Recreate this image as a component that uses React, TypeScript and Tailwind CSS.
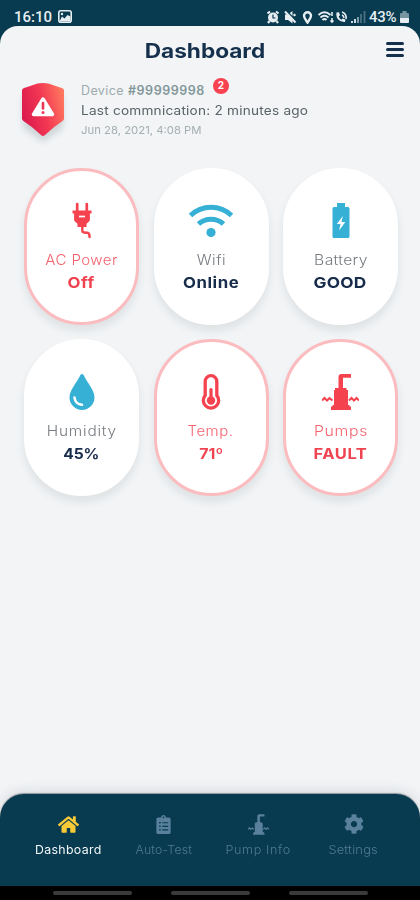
import React from "react";
import { FaClipboardList, FaCog, FaHome } from "react-icons/fa";

const PlugIcon = () => (
  <svg viewBox="0 0 20 37" className="h-[37px] w-5" fill="none">
    <path d="M5.200 2v8M14.800 2v8" stroke="#f5424f" strokeWidth="2.700" strokeLinecap="round" />
    <path d="M.5 8.500h19v3h-1.600v6.200a3 3 0 0 1-1.400 2.300l-2 1.800v3.200H5.500v-3.200l-2-1.800A3 3 0 0 1 2.100 17.700v-6.200H.5z" fill="#f5424f" />
    <path d="M7 14.500h6" stroke="#fff" strokeWidth="1.700" />
    <path d="M10.300 24v4.500q0 1.800 1.800 2l3 .3q2 .2 2.200 2l.3 2.200" stroke="#f5424f" strokeWidth="2.400" strokeLinecap="round" />
  </svg>
);

const WifiIcon = () => (
  <svg viewBox="0 0 46 34" className="h-[34px] w-[46px]" fill="none" stroke="#36b0d5">
    <path d="M2.500 11.500c11.500-11 29.500-11 41 0" strokeWidth="5" />
    <path d="M10.500 20c7-6.500 18-6.500 25 0" strokeWidth="5" />
    <circle cx="23" cy="28.500" r="4.600" fill="#36b0d5" stroke="none" />
  </svg>
);

const BatteryIcon = () => (
  <svg viewBox="0 0 18 36" className="h-9 w-[18px]">
    <path d="M5 0h8v4h3a1.500 1.500 0 0 1 1.500 1.500v28A1.500 1.500 0 0 1 16 35H2a1.500 1.500 0 0 1-1.500-1.500v-28A1.500 1.500 0 0 1 2 4h3z" fill="#36b0d5" />
    <path d="m10.800 13-6 8h3.700l-1.400 6.500 6.200-8.500H9.500z" fill="#fff" />
  </svg>
);

const DropIcon = () => (
  <svg viewBox="0 0 26 36" className="h-9 w-[26px]">
    <path d="M13 0c-1.200 0-1.800 1.200-2.400 2.400C7.500 9 .5 16 .5 23.500a12.500 12.500 0 0 0 25 0C25.500 16 18.500 9 15.400 2.400 14.800 1.200 14.200 0 13 0z" fill="#36b0d5" />
    <path d="M5.500 23.500c.3 4 3.300 7 7.500 7.300" stroke="#fff" strokeWidth="2.600" strokeLinecap="round" fill="none" />
  </svg>
);

const TempIcon = () => (
  <svg viewBox="0 0 20 36" className="h-9 w-5" fill="none">
    <path d="M4.200 7.500a5.800 5.800 0 0 1 11.600 0v13.800a7.700 7.700 0 1 1-11.600 0z" stroke="#f5424f" strokeWidth="3.300" />
    <path d="M10 15.500v11" stroke="#f5424f" strokeWidth="3.200" strokeLinecap="round" />
    <circle cx="10" cy="26.500" r="4.200" fill="#f5424f" />
  </svg>
);

const PumpIcon = ({ className }: { className: string }) => (
  <svg viewBox="0 0 37 36" className={className} fill="currentColor">
    <path d="M16.500 3q0-3 3-3H29v3.800h-8V14h3.500v2H26v15h1.500v1.500H29V36H9v-3.500h1.500V31H12V16h1v-2h3.500z" />
    <path d="m0 26.500 2.500-2.500 2.500 2.500L7.500 24l3 2.500M27 26.500l2.500-2.500 2.500 2.500 2.500-2.500 2.500 2.500" fill="none" stroke="currentColor" strokeWidth="2" />
  </svg>
);

type CardProps = { icon: React.ReactNode; label: string; value: string; alert?: boolean; labelClass: string; valueClass: string };

const Card = ({ icon, label, value, alert, labelClass, valueClass }: CardProps) => (
  <div className={`flex h-[157px] w-[115px] flex-col items-center rounded-full border-3 bg-white pt-[31px] shadow-[0_6px_9px_rgba(60,80,80,0.11)] ${alert ? "border-[#fbbcc0]" : "border-white"}`}>
    <div className="flex h-[37px] items-center">{icon}</div>
    <div className={`mt-[11px] whitespace-nowrap text-[14px] leading-[20px] font-light ${alert ? "text-[#f4636e]" : "text-[#777c82]"} ${labelClass}`}>{label}</div>
    <div className={`mt-[3px] whitespace-nowrap text-[15px] leading-[20px] font-bold ${alert ? "text-[#ef4350]" : "text-[#172c4b]"} ${valueClass}`}>{value}</div>
  </div>
);

const StatusBar = () => (
  <div className="flex h-[26px] items-end justify-between pr-[11px] pl-[14px] text-[#e6eef2]">
    <div className="flex h-[19px] items-center gap-[6px] font-[Roboto,sans-serif] text-[15px] leading-5 font-medium">
      <span>16:10</span>
      <svg viewBox="0 0 14 13" className="h-[13px] w-[14px]">
        <rect x=".8" y=".8" width="12.400" height="11.400" rx="2" fill="none" stroke="currentColor" strokeWidth="1.600" />
        <path d="m1.500 11.500 2.500-5 2.500 2L9.500 5l3 1.500v5z" fill="currentColor" />
        <circle cx="4" cy="4" r="1.200" fill="currentColor" />
      </svg>
    </div>
    <div className="flex h-[19px] items-center font-[Roboto,sans-serif] text-[14px] leading-5 font-medium">
      <svg viewBox="0 0 103 14" className="h-[14px] w-[103px]" fill="none" stroke="currentColor" strokeWidth="1.600">
        <circle cx="6" cy="7.500" r="5" fill="currentColor" stroke="none" />
        <path d="m.5 3.500 2.500-2M11.500 3.500 9 1.500M2.500 11 1 13M9.500 11l1.500 2" strokeWidth="2.200" />
        <path d="M6 4.500v3.500h2.500" stroke="#083a50" strokeWidth="1.200" />
        <path d="M18 4.500h3L25.500 1v12.500L21 10h-3z" fill="currentColor" stroke="none" />
        <path d="m19.500 1 9.500 9.500" stroke="#083a50" strokeWidth="1.600" />
        <path d="m18 1.500 10.500 11M26.500 5.500l2-1" strokeWidth="2" />
        <path d="M40.500 12.500c-2-3-3.500-4.500-3.500-6.700a3.500 3.500 0 0 1 7 0c0 2.200-1.500 3.700-3.500 6.700z" strokeWidth="2.400" />
        <path d="M51.500 5q6-5.500 12 0M53.500 7.500q4-3.500 8 0M55.500 10q2-2 4 0" strokeWidth="1.900" />
        <path d="M65 2v4M65 8v4M63.500 10.500 65 12l1.500-1.500" strokeWidth="1.600" />
        <path d="M69.500 2.500c-1 6 3 9.500 8.500 9.500l.5-2.500-3-1-1 1.200c-1.500-.8-2.300-1.800-2.800-3.200l1.300-1.200-1-3z" fill="currentColor" stroke="none" />
        <path d="M75 2q5 2 4 7M75 5q2 1 2 3" strokeWidth="1.500" />
        <path d="M85 13v-2M88 13V9" strokeWidth="1.800" />
        <path d="M91 13V7" strokeWidth="1.800" opacity=".6" />
        <path d="M94 13V4M97.500 13V1" strokeWidth="1.800" opacity=".3" />
      </svg>
      <span className="-ml-px w-[30px] whitespace-nowrap text-[15px] tracking-[-0.300px]">43%</span>
      <svg viewBox="0 0 9 14" className="ml-[1px] h-[14px] w-[9px]" fill="currentColor">
        <path d="M2.500 1h4v2H8a1 1 0 0 1 1 1v4H0V4a1 1 0 0 1 1-1h1.500z" opacity=".5" />
        <path d="M0 8h9v4a1 1 0 0 1-1 1H1a1 1 0 0 1-1-1z" />
      </svg>
    </div>
  </div>
);

const ShieldIcon = () => (
  <svg viewBox="0 0 58 72" className="h-[72px] w-[58px]">
    <defs>
      <linearGradient id="shield" x1="0" y1=".6" x2="1" y2=".3">
        <stop offset="0" stopColor="#db1a4d" />
        <stop offset=".5" stopColor="#f23753" />
        <stop offset="1" stopColor="#ff775f" />
      </linearGradient>
      <filter id="soft" x="-30%" y="-30%" width="160%" height="160%"><feGaussianBlur stdDeviation="3" /></filter>
    </defs>
    <path d="M9 18 29 11l20 7v32L29 64 9 50z" fill="#84989a" opacity=".32" filter="url(#soft)" />
    <path d="M10 10C17 8.500 21 5 29 5s12 3.500 19 5q2 .5 2 2.500V40.500q0 1.500-1.500 2.500Q40 48.500 31 57q-2 1.800-4 0Q18 48.500 9.500 43 8 42 8 40.500V12.500Q8 10.500 10 10z" fill="url(#shield)" />
    <path d="m29 21 9.500 15.500h-19z" fill="#fff" stroke="#fff" strokeWidth="3.500" strokeLinejoin="round" />
    <path d="M29 25v5.500" stroke="#ed3654" strokeWidth="2.600" strokeLinecap="round" />
    <circle cx="29" cy="34.500" r="1.500" fill="#ed3654" />
  </svg>
);

const NavItem = ({ icon, label, active, labelClass }: { icon: React.ReactNode; label: string; active?: boolean; labelClass: string }) => (
  <div className={`flex w-[95px] flex-col items-center ${active ? "text-[#f7cb38]" : "text-[#59809c]"}`}>
    <div className="flex h-[22px] items-center">{icon}</div>
    <div className={`mt-[7px] whitespace-nowrap text-[12px] leading-4 ${active ? "text-[#f2f7f9]" : "font-light text-[#4f7a95]"} ${labelClass}`}>{label}</div>
  </div>
);

export default function App() {
  return (
    <div className="flex h-[900px] w-[420px] flex-col overflow-hidden bg-[#083a50] font-[Inter,sans-serif]">
      <StatusBar />
      <div className="flex min-h-0 flex-1 flex-col rounded-t-[18px] bg-[#f2f4f6]">
        <header className="grid h-[48px] grid-cols-[144px_122px_1fr] items-center pt-[1px] pr-[16px]">
          <span />
          <h1 className="flex scale-x-[1.130] justify-center text-[20px] font-bold text-[#14304c]">Dashboard</h1>
          <div className="flex flex-col gap-[3px] justify-self-end pb-[2px]">
            <span className="h-[3px] w-[18px] rounded-full bg-[#14304c]" />
            <span className="h-[3px] w-[18px] rounded-full bg-[#14304c]" />
            <span className="h-[3px] w-[18px] rounded-full bg-[#14304c]" />
          </div>
        </header>
        <section className="flex h-[94px] pt-[4px] pl-[14px]">
          <ShieldIcon />
          <div className="ml-[9px] pt-[3px] whitespace-nowrap">
            <div className="flex h-[20px] items-center pt-px text-[12.500px] text-[#9eabad]">
              <span className="tracking-[0.400px]">Device</span>
              <span className="ml-[4px] font-semibold tracking-[0.550px] text-[#82979a]">#99999998</span>
              <span className="mb-[12px] ml-[8px] flex size-4 items-center justify-center rounded-full bg-[#f94250] text-[10px] font-bold text-white">2</span>
            </div>
            <div className="w-fit origin-left scale-x-[1.090] text-[12.500px] leading-[20px] tracking-[0.200px] text-[#596467]">Last commnication: 2 minutes ago</div>
            <div className="w-fit origin-left scale-x-[1.030] text-[11px] leading-[18px] text-[#a4afb1]">Jun 28, 2021, 4:08 PM</div>
          </div>
        </section>
        <main className="grid grid-cols-[repeat(3,115px)] gap-x-[14.500px] gap-y-[14px] pl-[24px]">
          <Card alert icon={<PlugIcon />} label="AC Power" value="Off" labelClass="scale-x-[1.080] tracking-[0.350px]" valueClass="scale-x-[1.120] tracking-[0.500px]" />
          <Card icon={<WifiIcon />} label="Wifi" value="Online" labelClass="scale-x-[1.100] tracking-[0.500px]" valueClass="scale-x-[1.120] tracking-[0.500px]" />
          <Card icon={<BatteryIcon />} label="Battery" value="GOOD" labelClass="scale-x-[1.120] tracking-[0.300px]" valueClass="scale-x-[1.150] tracking-[0.200px]" />
          <Card icon={<DropIcon />} label="Humidity" value="45%" labelClass="scale-x-[1.100] tracking-[0.700px]" valueClass="scale-x-[1.040] tracking-[-0.200px]" />
          <Card alert icon={<TempIcon />} label="Temp." value="71º" labelClass="scale-x-[1.070] tracking-[0.500px]" valueClass="scale-x-[1.060]" />
          <Card alert icon={<PumpIcon className="h-9 w-[37px] text-[#f5424f]" />} label="Pumps" value="FAULT" labelClass="scale-x-[1.130] tracking-[0.600px]" valueClass="scale-x-[1.100] tracking-[0.500px]" />
        </main>
        <div className="mt-auto">
          <nav className="flex h-[92px] rounded-t-[24px] bg-[#083a50] pt-[19px] pl-[21px] shadow-[0_-1px_1px_rgba(40,50,60,0.45),0_-2px_14px_rgba(40,50,60,0.14)]">
            <NavItem active icon={<FaHome className="size-[21px]" />} label="Dashboard" labelClass="scale-x-[1.030] tracking-[0.300px]" />
            <NavItem icon={<FaClipboardList className="size-[19px]" />} label="Auto-Test" labelClass="scale-x-[1.020] tracking-[0.200px]" />
            <NavItem icon={<PumpIcon className="h-[21px] w-[21px]" />} label="Pump Info" labelClass="scale-x-[1.050] tracking-[0.600px]" />
            <NavItem icon={<FaCog className="size-[20px]" />} label="Settings" labelClass="scale-x-[1.070] tracking-[0.200px]" />
          </nav>
        </div>
      </div>
      <div className="z-10 flex h-[14px] items-center justify-center gap-[39px] bg-black">
        <span className="h-1 w-[79px] rounded-full bg-[#3b3b3b]" />
        <span className="h-1 w-[79px] rounded-full bg-[#3b3b3b]" />
        <span className="h-1 w-[79px] rounded-full bg-[#3b3b3b]" />
      </div>
    </div>
  );
}
